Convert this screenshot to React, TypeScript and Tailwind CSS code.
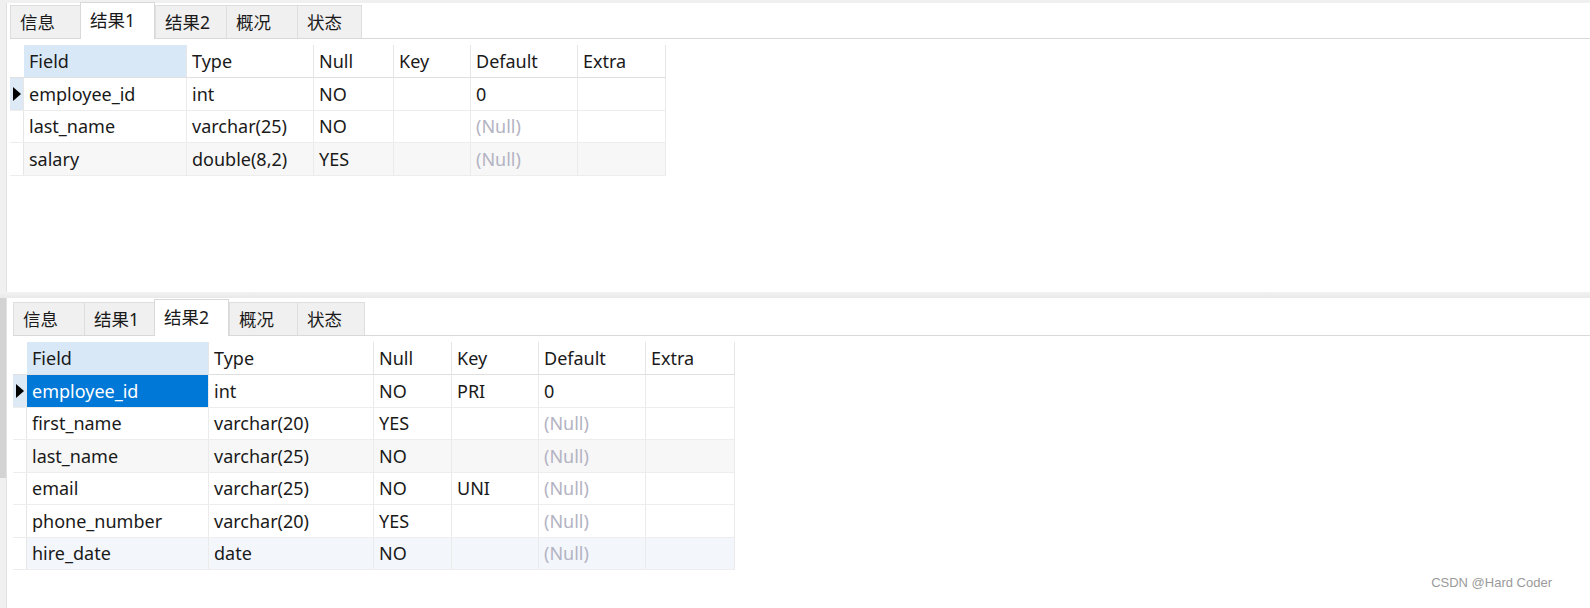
import React from 'react';

type Row = { cells: string[]; bg?: string };

const font = { fontFamily: '"Noto Sans", "Noto Sans CJK SC", sans-serif' };

const Tabs: React.FC<{ active: number; tabWidths: number[] }> = ({ active, tabWidths }) => {
  const labels = ['信息', '结果1', '结果2', '概况', '状态'];
  return (
    <div className="flex items-end h-[36px] border-b border-[#d9d9d9]">
      {labels.map((l, i) =>
        i === active ? (
          <div
            key={l}
            style={{ width: tabWidths[i] }}
            className="shrink-0 h-[37px] -mb-px bg-white border border-b-0 border-[#d9d9d9] flex items-start pt-[4px] pl-[9px] text-[17.5px] text-[#1a1a1a]"
          >
            {l}
          </div>
        ) : (
          <div
            key={l}
            style={{ width: tabWidths[i] }}
            className="shrink-0 h-[33px] bg-[#f0f0f0] border-l border-t border-[#dedede] flex items-center pl-[9px] text-[17.5px] text-[#1a1a1a] last:border-r"
          >
            {l}
          </div>
        )
      )}
    </div>
  );
};

const Table: React.FC<{ widths: number[]; rows: Row[]; selectedField?: boolean }> = ({ widths, rows, selectedField }) => {
  const headers = ['Field', 'Type', 'Null', 'Key', 'Default', 'Extra'];
  return (
    <div className="w-fit flex flex-col text-[18px] text-[#1a1a1a]">
      <div className="flex h-[33px] border-b border-[#e0e0e0]">
        <div style={{ width: widths[0] }} className="shrink-0 bg-white" />
        {headers.map((h, i) => (
          <div
            key={h}
            style={{ width: widths[i + 1] }}
            className={`shrink-0 flex items-center pl-[5px] border-r border-[#e6e6e6] ${i === 0 ? 'bg-[#d9e8f6]' : 'bg-white'}`}
          >
            {h}
          </div>
        ))}
      </div>
      {rows.map((r, ri) => (
        <div key={ri} className={`flex ${ri % 2 === 0 ? 'h-[33px]' : 'h-[32px]'} border-b border-[#ededed]`} style={{ background: r.bg ?? '#ffffff' }}>
          <div
            style={{ width: widths[0] }}
            className={`shrink-0 flex items-center justify-center border-r border-[#e6e6e6] ${ri === 0 ? 'bg-[#dde9f5]' : 'bg-white'}`}
          >
            {ri === 0 && (
              <svg width="8" height="14" viewBox="0 0 8 14">
                <path d="M0 0 L8 7 L0 14 Z" fill="#000" />
              </svg>
            )}
          </div>
          {r.cells.map((c, ci) => {
            const isNull = c === '(Null)';
            const sel = selectedField && ri === 0 && ci === 0;
            return (
              <div
                key={ci}
                style={{ width: widths[ci + 1] }}
                className={`shrink-0 flex items-center pl-[5px] border-r border-[#ebebeb] ${sel ? 'bg-[#0078d7] text-white' : ''} ${isNull ? 'text-[#b3b3c3]' : ''}`}
              >
                {c}
              </div>
            );
          })}
        </div>
      ))}
    </div>
  );
};

const topRows: Row[] = [
  { cells: ['employee_id', 'int', 'NO', '', '0', ''] },
  { cells: ['last_name', 'varchar(25)', 'NO', '', '(Null)', ''] },
  { cells: ['salary', 'double(8,2)', 'YES', '', '(Null)', ''], bg: '#f7f7f7' },
];

const bottomRows: Row[] = [
  { cells: ['employee_id', 'int', 'NO', 'PRI', '0', ''] },
  { cells: ['first_name', 'varchar(20)', 'YES', '', '(Null)', ''] },
  { cells: ['last_name', 'varchar(25)', 'NO', '', '(Null)', ''], bg: '#f7f7f7' },
  { cells: ['email', 'varchar(25)', 'NO', 'UNI', '(Null)', ''] },
  { cells: ['phone_number', 'varchar(20)', 'YES', '', '(Null)', ''] },
  { cells: ['hire_date', 'date', 'NO', '', '(Null)', ''], bg: '#f3f7fc' },
];

const App: React.FC = () => {
  return (
    <div className="w-[1590px] h-[608px] bg-white flex flex-col overflow-hidden relative" style={font}>
      <div className="h-[3px] bg-[#f0f0f0]" />
      {/* Top panel */}
      <div className="h-[289px] flex">
        <div className="w-[7px] bg-[#f0f0f0] border-r border-[#e2e2e2]" />
        <div className="flex-1 flex flex-col pl-[3px]">
          <Tabs active={1} tabWidths={[70, 75, 71, 71, 65]} />
          <div className="mt-[6px]">
            <Table widths={[14, 163, 127, 80, 77, 107, 88]} rows={topRows} />
          </div>
        </div>
      </div>
      {/* Splitter */}
      <div className="h-[6px] bg-gradient-to-b from-[#f2f2f2] to-[#e9e9e9]" />
      {/* Bottom panel */}
      <div className="flex-1 flex">
        <div className="w-[7px] flex flex-col border-r border-[#e2e2e2]">
          <div className="h-[180px] bg-[#d3d3d3]" />
          <div className="flex-1 bg-[#f0f0f0]" />
        </div>
        <div className="flex-1 flex flex-col pl-[6px] pt-[2px]">
          <Tabs active={2} tabWidths={[71, 70, 75, 68, 68]} />
          <div className="mt-[6px]">
            <Table widths={[14, 182, 165, 78, 87, 107, 89]} rows={bottomRows} selectedField />
          </div>
        </div>
      </div>
      <div
        className="absolute right-[38px] bottom-[16px] text-[13px] text-[#9a9a9a]"
        style={{ fontFamily: '"Liberation Sans", Arial, sans-serif' }}
      >
        CSDN @Hard Coder
      </div>
    </div>
  );
};

export default App;
